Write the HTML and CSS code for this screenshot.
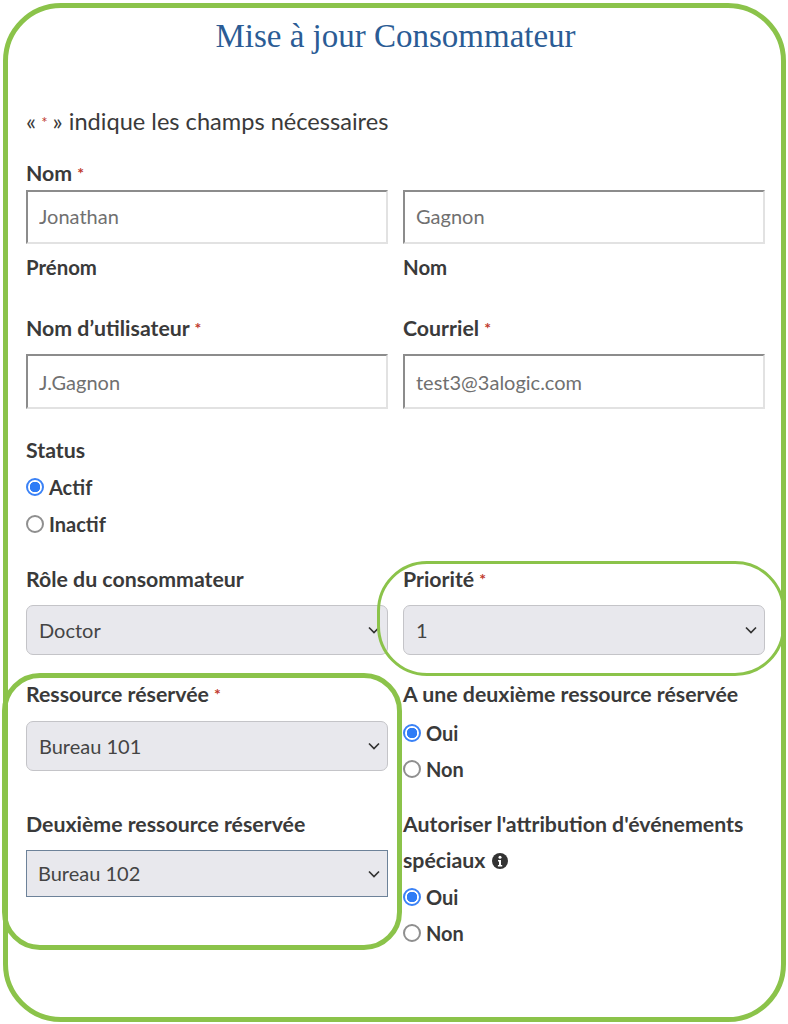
FILE: index.html
```html
<!DOCTYPE html>
<html lang="fr">
<head>
  <meta charset="UTF-8" />
  <meta name="viewport" content="width=device-width, initial-scale=1.0"/>
  <title>Mise à jour Consommateur</title>
  <link rel="stylesheet" href="styles.css">
</head>
<body>

  <!-- Green hand-drawn highlights -->
  <div class="mark mark-frame"></div>
  <div class="mark mark-priority"></div>
  <div class="mark mark-resource"></div>

  <div class="page">
    <h1 class="title">Mise à jour Consommateur</h1>
    <p class="notice">« <span class="req">*</span> » indique les champs nécessaires</p>

    <!-- Name -->
    <div class="label label-name">Nom <span class="req">*</span></div>
    <div class="row">
      <div>
        <input class="text-input" type="text" value="Jonathan" />
        <div class="label sublabel">Prénom</div>
      </div>
      <div>
        <input class="text-input" type="text" value="Gagnon" />
        <div class="label sublabel">Nom</div>
      </div>
    </div>

    <!-- Account -->
    <div class="row row-account">
      <div>
        <div class="label label-account">Nom d’utilisateur <span class="req">*</span></div>
        <input class="text-input" type="text" value="J.Gagnon" />
      </div>
      <div>
        <div class="label label-account">Courriel <span class="req">*</span></div>
        <input class="text-input" type="text" value="test3@3alogic.com" />
      </div>
    </div>

    <!-- Status -->
    <div class="group-status">
      <div class="label">Status</div>
      <label class="radio"><input type="radio" name="status" checked /> Actif</label>
      <label class="radio"><input type="radio" name="status" /> Inactif</label>
    </div>

    <!-- Role / priority -->
    <div class="row row-role">
      <div>
        <div class="label label-select">Rôle du consommateur</div>
        <select class="select"><option>Doctor</option></select>
      </div>
      <div>
        <div class="label label-select">Priorité <span class="req">*</span></div>
        <select class="select"><option>1</option></select>
      </div>
    </div>

    <!-- Resources -->
    <div class="row row-resource">
      <div>
        <div class="label label-select label-resource">Ressource réservée <span class="req">*</span></div>
        <select class="select"><option>Bureau 101</option></select>
        <div class="label label-second">Deuxième ressource réservée</div>
        <select class="select select-square"><option>Bureau 102</option></select>
      </div>
      <div>
        <div class="label">A une deuxième ressource réservée</div>
        <label class="radio radio-first"><input type="radio" name="second" checked /> Oui</label>
        <label class="radio"><input type="radio" name="second" /> Non</label>
        <div class="label label-events">
          Autoriser l'attribution d'événements spéciaux
          <svg class="info" viewBox="0 0 16 16" aria-hidden="true">
            <circle cx="8" cy="8" r="8" fill="#333"/>
            <circle cx="8" cy="4.3" r="1.5" fill="#fff"/>
            <path d="M6 7h3v5h1.2v1.6H5.9V12H7V8.6H6z" fill="#fff"/>
          </svg>
        </div>
        <label class="radio radio-after-events"><input type="radio" name="events" checked /> Oui</label>
        <label class="radio"><input type="radio" name="events" /> Non</label>
      </div>
    </div>
  </div>
</body>
</html>
```

FILE: styles.css
```css
* {
  box-sizing: border-box;
}

body {
  margin: 0;
  width: 788px;
  height: 1024px;
  overflow: hidden;
  background-color: #fff;
  color: #3a3a3a;
  font-family: 'Lato', sans-serif;
}

.mark {
  position: absolute;
  border: 5px solid #8bc34a;
  pointer-events: none;
}

.mark-frame {
  left: 3px;
  top: 3px;
  width: 783px;
  height: 1019px;
  border-radius: 58px;
}

.mark-priority {
  left: 377px;
  top: 561px;
  width: 408px;
  height: 115px;
  border-width: 3px;
  border-radius: 50px;
}

.mark-resource {
  left: 2px;
  top: 673px;
  width: 400px;
  height: 277px;
  border-radius: 38px;
}

.page {
  padding: 15px 23px 0 26px;
}

.title {
  margin: 0;
  text-align: center;
  font-family: 'Liberation Serif', serif;
  font-size: 33px;
  font-weight: 400;
  line-height: 42px;
  color: #2b5c95;
}

.notice {
  margin: 48px 0 0;
  font-size: 23.6px;
  line-height: 32px;
}

.notice .req {
  margin: 0 -1px;
  font-size: 15px;
  line-height: 0;
}

.req {
  color: #c0392b;
  font-size: 16px;
  vertical-align: 2px;
}

.label {
  font-size: 21.3px;
  font-weight: 700;
  line-height: 36px;
}

.label-name {
  margin-top: 19px;
  line-height: 34px;
}

.row {
  display: grid;
  grid-template-columns: 362px 362px;
  column-gap: 15px;
}

.sublabel {
  margin-top: 5px;
  font-size: 20.4px;
}

.row-account {
  margin-top: 25px;
}

.row-account .text-input {
  height: 55px;
  padding-bottom: 0;
}

.label-account {
  margin-bottom: 8px;
}

.text-input {
  display: block;
  width: 100%;
  height: 54px;
  padding: 0 11px 2px;
  border: 2px solid #e2e2e2;
  border-top-color: #8c8c8c;
  border-left-color: #8c8c8c;
  border-radius: 0;
  background: #fff;
  color: #707070;
  font-family: inherit;
  font-size: 20px;
}

.group-status {
  margin-top: 23px;
}

.group-status .radio {
  height: 37px;
}

.radio {
  display: flex;
  align-items: center;
  gap: 5px;
  height: 36px;
  font-size: 20px;
  font-weight: 700;
}

.radio input {
  appearance: none;
  flex: none;
  width: 18px;
  height: 18px;
  margin: 0;
  border: 2px solid #8f8f8f;
  border-radius: 50%;
  background: #fff;
}

.radio input:checked {
  border-color: #3b82f6;
  background: radial-gradient(circle, #2f7cf6 0 5px, #fff 5.5px);
}

.row-role {
  margin-top: 19px;
}

.label-select {
  margin-bottom: 8px;
}

.select {
  display: block;
  width: 100%;
  height: 50px;
  padding: 0 12px 1px;
  appearance: none;
  border: 1px solid #c4c4c8;
  border-radius: 7px;
  color: #444;
  font-family: inherit;
  font-size: 20px;
  background: #e8e8ed url("data:image/svg+xml,%3Csvg xmlns='http://www.w3.org/2000/svg' width='12' height='8'%3E%3Cpath d='M1 1.5l5 5 5-5' fill='none' stroke='%23333' stroke-width='1.7'/%3E%3C/svg%3E") no-repeat right 7px center;
}

.select-square {
  height: 47px;
  padding: 0 11px 1px;
  border-color: #6d8299;
  border-radius: 0;
}

.row-resource {
  margin-top: 21px;
}

.label-resource {
  margin-bottom: 9px;
}

.label-second {
  margin-top: 35px;
  margin-bottom: 8px;
}

.radio-first {
  margin-top: 3px;
}

.radio-after-events {
  margin-top: 1px;
}

.label-events {
  margin-top: 19px;
}

.info {
  width: 16px;
  height: 16px;
  margin-left: 1px;
  vertical-align: -1px;
}
```
